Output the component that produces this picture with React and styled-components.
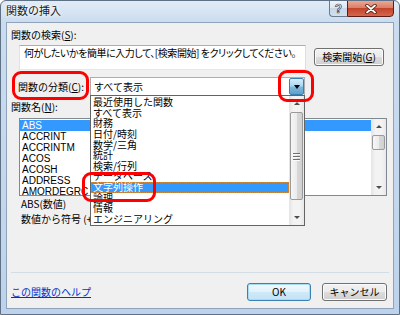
import React from 'react';
import styled, { createGlobalStyle } from 'styled-components';

const GlobalStyle = createGlobalStyle`
  html, body { margin: 0; padding: 0; background: #ffffff; }
  body { font-family: "Noto Sans CJK JP", "Liberation Sans", sans-serif; }
`;

const latin = `"Liberation Sans", "Noto Sans CJK JP", sans-serif`;
const jp = `"Noto Sans CJK JP", "Liberation Sans", sans-serif`;

// --- Window frame ---
const Window = styled.div`
  width: 400px;
  height: 315px;
  box-sizing: border-box;
  display: flex;
  flex-direction: column;
  border: 1px solid #5f7184;
  border-radius: 6px 6px 0 0;
  background: linear-gradient(180deg, #e2ecf7 0px, #cbdcef 21px, #bed3eb 100%);
  font-family: ${jp};
  font-size: 10px;
  color: #000;
  overflow: hidden;
`;
const TitleBar = styled.div`
  height: 21px;
  display: flex;
  align-items: flex-start;
  padding-left: 5px;
`;
const Title = styled.div`
  font-size: 11px;
  line-height: 19px;
  color: #1a1a1a;
  text-shadow: 0 0 5px #ffffff, 0 0 3px #ffffff;
`;
const Captions = styled.div`
  margin-left: auto;
  margin-right: 5px;
  margin-top: -1px;
  display: flex;
`;
const HelpCaption = styled.div`
  width: 18px;
  height: 17px;
  box-sizing: border-box;
  border: 1px solid #6a7b90;
  border-right: none;
  border-radius: 0 0 0 4px;
  background: linear-gradient(180deg, #eef3f9 0%, #dbe5f1 50%, #c8d6e7 50%, #d3e0ee 100%);
  display: flex;
  align-items: center;
  justify-content: center;
  font-family: ${latin};
  font-weight: bold;
  font-size: 12px;
  color: #ffffff;
  -webkit-text-stroke: 0.7px #3a4656;
`;
const CloseCaption = styled.div`
  width: 47px;
  height: 17px;
  box-sizing: border-box;
  border: 1px solid #5c1e14;
  border-radius: 0 0 4px 0;
  background: linear-gradient(180deg, #e9a895 0%, #d97a62 50%, #c2442b 50%, #d5674d 100%);
  display: flex;
  align-items: center;
  justify-content: center;
`;

// --- Client area ---
const Client = styled.div`
  flex: 1;
  margin: 0 5px 5px;
  border: 1px solid #8fa3ba;
  background: #f0f0f0;
  display: flex;
  flex-direction: column;
  position: relative;
`;
const Label = styled.div`
  height: 12px;
  line-height: 12px;
  margin: ${p => p.$top}px 0 0 4px;
  white-space: nowrap;
`;
const SearchRow = styled.div`
  display: flex;
  align-items: flex-start;
  margin-top: 4px;
  padding-left: 12px;
`;
const SearchBox = styled.div`
  width: 287px;
  height: 25px;
  box-sizing: border-box;
  background: #ffffff;
  border: 1px solid #abadb3;
  border-bottom-color: #e3e9ef;
  border-left-color: #e2e3ea;
  border-right-color: #dbdfe6;
  padding: 1px 4px;
  line-height: 12px;
  white-space: nowrap;
  overflow: hidden;
  letter-spacing: -0.45px;
  font-feature-settings: "palt";
`;
const Button = styled.div`
  width: ${p => p.$w}px;
  height: 18px;
  box-sizing: border-box;
  margin-left: ${p => p.$ml || 0}px;
  margin-top: ${p => p.$mt || 0}px;
  border: 1px solid ${p => (p.$default ? '#3c7fb1' : '#707070')};
  border-radius: 3px;
  background: ${p =>
    p.$default
      ? 'linear-gradient(180deg, #f0f8fd 0%, #e2f1fb 50%, #cfe9f8 50%, #c2e3f6 100%)'
      : 'linear-gradient(180deg, #f2f2f2 0%, #ebebeb 50%, #dddddd 50%, #cfcfcf 100%)'};
  box-shadow: inset 0 0 0 1px ${p => (p.$default ? '#a6dcf6' : '#fbfbfb')};
  display: flex;
  align-items: center;
  justify-content: center;
  line-height: 12px;
  white-space: nowrap;
`;
const CategoryRow = styled.div`
  display: flex;
  align-items: center;
  margin-top: 7px;
  padding-left: 11px;
`;
const CategoryLabel = styled.div`
  width: 72px;
  line-height: 12px;
  white-space: nowrap;
`;
const Combo = styled.div`
  width: 215px;
  height: 19px;
  box-sizing: border-box;
  border: 1px solid #abadb3;
  background: #ffffff;
  display: flex;
  align-items: center;
  padding-left: 3px;
`;
const ComboText = styled.span`
  flex: 1;
  line-height: 12px;
`;
const DropButton = styled.div`
  width: 15px;
  height: 17px;
  box-sizing: border-box;
  border: 1px solid #3c7fb1;
  border-radius: 2px;
  background: linear-gradient(180deg, #d6eefb 0%, #a9d8f2 45%, #7db9de 55%, #5f9fcb 100%);
  display: flex;
  align-items: center;
  justify-content: center;
`;
const Tri = styled.span`
  width: 0;
  height: 0;
  border-left: ${p => p.$s}px solid transparent;
  border-right: ${p => p.$s}px solid transparent;
  ${p => (p.$up ? 'border-bottom' : 'border-top')}: ${p => p.$h}px solid ${p => p.$c || '#4d4d4d'};
`;

// --- list boxes ---
const ListBox = styled.div`
  width: 368px;
  height: 78px;
  box-sizing: border-box;
  margin: 5px 0 0 12px;
  border: 1px solid #828790;
  background: #ffffff;
  display: flex;
`;
const Items = styled.div`
  flex: 1;
  padding: 1px 0 0 0;
  overflow: hidden;
`;
const Item = styled.div`
  height: ${p => p.$h}px;
  line-height: ${p => p.$h}px;
  padding-left: ${p => p.$pl}px;
  font-family: ${p => (p.$latin ? latin : jp)};
  font-size: 10px;
  white-space: nowrap;
  box-sizing: border-box;
  background: ${p => (p.$selected ? '#3399ff' : 'transparent')};
  color: ${p => (p.$selected ? '#ffffff' : '#000000')};
  outline: ${p => (p.$focus ? '1px dotted #d08a3a' : 'none')};
  outline-offset: -1px;
`;
const VScroll = styled.div`
  width: 15px;
  display: flex;
  flex-direction: column;
  background: linear-gradient(90deg, #e4e4e4 0%, #f3f3f3 30%, #f3f3f3 70%, #e8e8e8 100%);
`;
const ScrollArrow = styled.div`
  height: 15px;
  flex: none;
  display: flex;
  align-items: center;
  justify-content: center;
`;
const Thumb = styled.div`
  height: ${p => p.$h}px;
  flex: none;
  margin: ${p => p.$gap}px 1px 0;
  box-sizing: border-box;
  border: 1px solid #9a9a9a;
  border-radius: 2px;
  background: linear-gradient(90deg, #f6f6f6 0%, #ececec 50%, #d9d9d9 51%, #d0d0d0 100%);
  display: flex;
  flex-direction: column;
  align-items: center;
  justify-content: center;
  gap: 2px;
`;
const Grip = styled.span`
  width: 7px;
  height: 1px;
  background: #6f6f6f;
  box-shadow: 0 1px 0 #fafafa;
`;
const Track = styled.div`
  flex: 1;
`;

const Description = styled.div`
  margin-left: 14px;
  line-height: 15px;
  white-space: nowrap;
`;
const Spacer = styled.div`
  flex: 1;
`;
const Separator = styled.div`
  height: 1px;
  margin: 0 4px;
  background: #d3dde6;
`;
const Footer = styled.div`
  display: flex;
  align-items: center;
  gap: 11px;
  height: 18px;
  margin: 10px 6px 7px 4px;
`;
const HelpLink = styled.a`
  margin-right: auto;
  color: #0033cc;
  text-decoration: underline;
  line-height: 12px;
  cursor: pointer;
`;

// --- popup / annotation overlays ---
const Popup = styled.div`
  position: absolute;
  left: 83px;
  top: 72px;
  width: 215px;
  height: 131px;
  box-sizing: border-box;
  border: 1px solid #646464;
  background: #ffffff;
  display: flex;
`;
const Mark = styled.div`
  position: absolute;
  left: ${p => p.$x}px;
  top: ${p => p.$y}px;
  width: ${p => p.$w}px;
  height: ${p => p.$h}px;
  box-sizing: border-box;
  border: 3px solid #ff0000;
  border-radius: 9px;
  pointer-events: none;
`;

const functions = ['ABS', 'ACCRINT', 'ACCRINTM', 'ACOS', 'ACOSH', 'ADDRESS', 'AMORDEGRC'];
const categories = [
  '最近使用した関数',
  'すべて表示',
  '財務',
  '日付/時刻',
  '数学/三角',
  '統計',
  '検索/行列',
  'データベース',
  '文字列操作',
  '論理',
  '情報',
  'エンジニアリング',
];

const Scrollbar = ({ thumbH, gap = 0, grip }) => (
  <VScroll>
    <ScrollArrow><Tri $up $s={3} $h={3} /></ScrollArrow>
    <Thumb $h={thumbH} $gap={gap}>
      {grip && (<><Grip /><Grip /><Grip /></>)}
    </Thumb>
    <Track />
    <ScrollArrow><Tri $s={3} $h={3} /></ScrollArrow>
  </VScroll>
);

const CloseIcon = () => (
  <svg width="14" height="10" viewBox="0 0 14 10">
    <path d="M3 1.5 L11 8.5 M11 1.5 L3 8.5" stroke="#4a1208" strokeWidth="3.4" strokeLinecap="round" />
    <path d="M3 1.5 L11 8.5 M11 1.5 L3 8.5" stroke="#ffffff" strokeWidth="1.8" strokeLinecap="round" />
  </svg>
);

export default function App() {
  return (
    <>
      <GlobalStyle />
      <Window>
        <TitleBar>
          <Title>関数の挿入</Title>
          <Captions>
            <HelpCaption>?</HelpCaption>
            <CloseCaption><CloseIcon /></CloseCaption>
          </Captions>
        </TitleBar>

        <Client>
          <Label $top={6}>関数の検索(<u>S</u>):</Label>
          <SearchRow>
            <SearchBox>何がしたいかを簡単に入力して、[検索開始] をクリックしてください。</SearchBox>
            <Button $w={70} $ml={8} $mt={3}>検索開始(<u>G</u>)</Button>
          </SearchRow>

          <CategoryRow>
            <CategoryLabel>関数の分類(<u>C</u>):</CategoryLabel>
            <Combo>
              <ComboText>すべて表示</ComboText>
              <DropButton><Tri $s={3.5} $h={4} $c="#000" /></DropButton>
            </Combo>
          </CategoryRow>

          <Label $top={5}>関数名(<u>N</u>):</Label>
          <ListBox>
            <Items>
              {functions.map((f, i) => (
                <Item key={f} $h={11} $pl={2} $latin $selected={i === 0}>{f}</Item>
              ))}
            </Items>
            <Scrollbar thumbH={15} gap={1} />
          </ListBox>

          <Description>
            ABS(数値)<br />
            数値から符号 (+、-) を除いた絶対値を返します。
          </Description>

          <Spacer />
          <Separator />
          <Footer>
            <HelpLink>この関数のヘルプ</HelpLink>
            <Button $w={64} $default>OK</Button>
            <Button $w={65}>キャンセル</Button>
          </Footer>

          <Popup>
            <Items>
              {categories.map((c, i) => (
                <Item key={c} $h={10.65} $pl={2} $selected={i === 8} $focus={i === 8}>{c}</Item>
              ))}
            </Items>
            <Scrollbar thumbH={88} gap={1} grip />
          </Popup>

          <Mark $x={5} $y={48} $w={77} $h={29} />
          <Mark $x={271} $y={47} $w={36} $h={32} />
          <Mark $x={75} $y={149} $w={74} $h={30} />
        </Client>
      </Window>
    </>
  );
}
